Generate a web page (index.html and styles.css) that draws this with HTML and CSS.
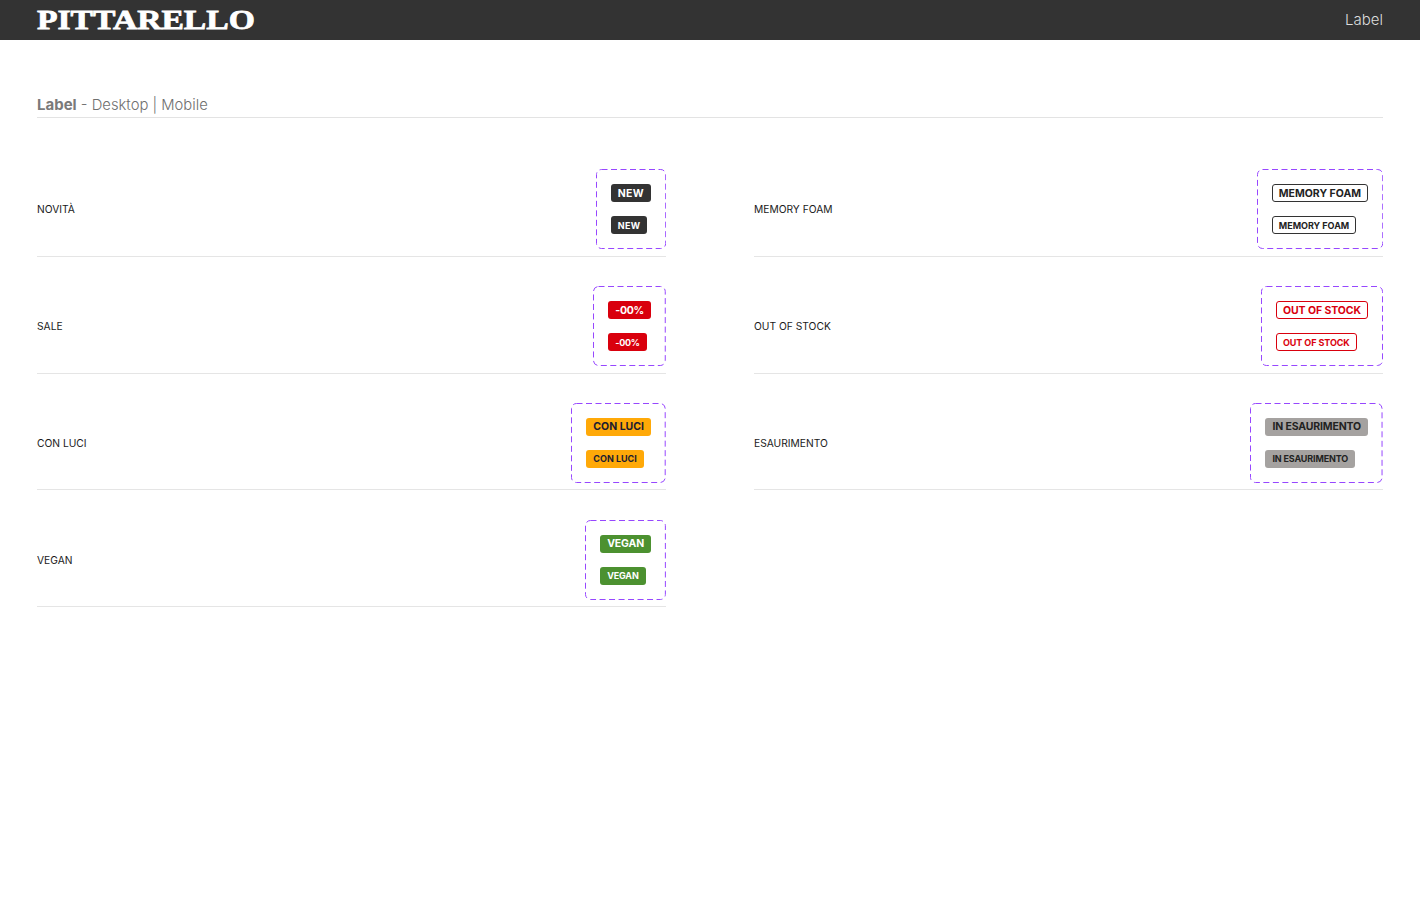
FILE: index.html
```html
<!DOCTYPE html>
<html lang="it">
<head>
<meta charset="utf-8">
<title>Label</title>
<link rel="stylesheet" href="styles.css">
</head>
<body>
<header class="topbar">
  <div class="logo">PITTARELLO</div>
  <div class="topbar-title">Label</div>
</header>
<main class="page">
  <h1 class="heading"><strong>Label</strong> - Desktop | Mobile</h1>
  <div class="grid">
    <div class="row"><span class="name">NOVITÀ</span><div class="box"><svg class="dash" aria-hidden="true"><rect></rect></svg><span class="tag lg dark">NEW</span><span class="tag sm dark">NEW</span></div></div>
    <div class="row"><span class="name">MEMORY FOAM</span><div class="box"><svg class="dash" aria-hidden="true"><rect></rect></svg><span class="tag lg outline">MEMORY FOAM</span><span class="tag sm outline">MEMORY FOAM</span></div></div>
    <div class="row"><span class="name">SALE</span><div class="box"><svg class="dash" aria-hidden="true"><rect></rect></svg><span class="tag lg red">-00%</span><span class="tag sm red">-00%</span></div></div>
    <div class="row"><span class="name">OUT OF STOCK</span><div class="box"><svg class="dash" aria-hidden="true"><rect></rect></svg><span class="tag lg red-outline">OUT OF STOCK</span><span class="tag sm red-outline">OUT OF STOCK</span></div></div>
    <div class="row tight"><span class="name">CON LUCI</span><div class="box"><svg class="dash" aria-hidden="true"><rect></rect></svg><span class="tag lg orange">CON LUCI</span><span class="tag sm orange">CON LUCI</span></div></div>
    <div class="row tight"><span class="name">ESAURIMENTO</span><div class="box"><svg class="dash" aria-hidden="true"><rect></rect></svg><span class="tag lg grey">IN ESAURIMENTO</span><span class="tag sm grey">IN ESAURIMENTO</span></div></div>
    <div class="row tight"><span class="name">VEGAN</span><div class="box"><svg class="dash" aria-hidden="true"><rect></rect></svg><span class="tag lg green">VEGAN</span><span class="tag sm green">VEGAN</span></div></div>
  </div>
</main>
</body>
</html>
```
FILE: styles.css
```css
* { box-sizing: border-box; }
html, body { margin: 0; padding: 0; }
body { background: #fff; font-family: Inter, "Liberation Sans", sans-serif; color: #1a1a1a; min-height: 902px; }

.topbar { height: 40px; background: #333; display: flex; align-items: center; justify-content: space-between; padding: 0 37px; overflow: hidden; }
.logo { font-family: "Liberation Serif", serif; font-weight: 700; font-size: 28px; line-height: 40px; color: #fff; -webkit-text-stroke: 0.8px #fff; transform: scaleX(1.2); transform-origin: left center; }
.topbar-title { font-size: 15px; font-weight: 300; color: #dcdcdc; padding-bottom: 1px; }

.page { padding: 0 37px; }
.heading { margin: 47px 0 0; height: 31px; font-size: 14.8px; line-height: 36px; font-weight: 300; color: #6f6f6f; border-bottom: 1px solid #e3e3e3; }
.heading strong { font-size: 15px; font-weight: 700; color: #7a7a7a; }

.grid { display: grid; grid-template-columns: 629px 629px; column-gap: 88px; row-gap: 29px; margin-top: 51px; }
.row { display: flex; align-items: flex-start; justify-content: space-between; padding-bottom: 7px; border-bottom: 1px solid #e5e5e5; height: 88px; }
.row.tight { height: 87px; padding-bottom: 6px; margin-bottom: 1px; }
.name { font-size: 10.25px; line-height: 12px; margin-top: 34px; color: #1a1a1a; }
.box { position: relative; height: 80px; padding: 15px; display: flex; flex-direction: column; align-items: flex-start; gap: 14px; }
.dash { position: absolute; inset: 0; width: 100%; height: 100%; pointer-events: none; }
.dash rect { x: 0.5px; y: 0.5px; width: calc(100% - 1px); height: calc(100% - 1px); rx: 5px; ry: 5px; fill: none; stroke: #9747ff; stroke-width: 1px; stroke-dasharray: 6 3.5; }
.tag { display: block; height: 18px; border-radius: 3px; font-weight: 700; white-space: nowrap; border: 1px solid transparent; padding: 0 6px; }
.lg { font-size: 10.5px; line-height: 17px; }
.sm { font-size: 9px; line-height: 17px; }
.tight .tag { line-height: 16px; }
.dark { background: #333; color: #fff; letter-spacing: 0.3px; }
.outline { background: #fff; border-color: #333; color: #222; }
.red { background: #d9000d; color: #fff; letter-spacing: -0.25px; }
.red-outline { background: #fff; border-color: #d9000d; color: #d9000d; letter-spacing: -0.08px; }
.orange { background: #ffa908; color: #1c1c30; }
.grey { background: #a5a2a0; color: #222; letter-spacing: -0.15px; }
.green { background: #4c9130; color: #fff; letter-spacing: -0.15px; }
```
